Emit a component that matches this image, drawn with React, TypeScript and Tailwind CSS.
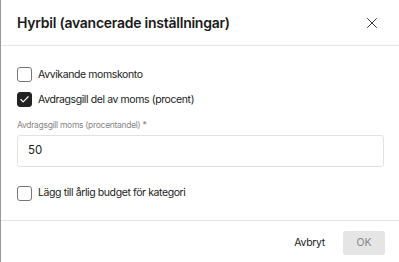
import { X, Check } from "lucide-react";

function Checkbox({ checked = false, label }: { checked?: boolean; label: string }) {
  return (
    <label className="flex items-center gap-[6px] h-[15px]">
      <span
        className={`flex h-[15px] w-[15px] items-center justify-center rounded-[3px] border ${
          checked ? "border-[#222] bg-[#222]" : "border-[#777] bg-white"
        }`}
      >
        {checked && <Check className="h-[11px] w-[11px] text-white" strokeWidth={2.5} />}
      </span>
      <span className="text-[10.5px] tracking-[-0.4px] text-[#222]">{label}</span>
    </label>
  );
}

export default function App() {
  return (
    <div className="h-[262px] w-[399px] overflow-hidden border-l border-[#999] bg-white font-['Inter',sans-serif]">
      {/* Header */}
      <div className="flex h-[46px] items-center justify-between border-b border-[#e5e5e5] pl-[16px] pr-[18px]">
        <h2 className="text-[14px] font-semibold tracking-[-0.25px] text-[#1a1a1a]">
          Hyrbil (avancerade inställningar)
        </h2>
        <X className="h-[18px] w-[18px] text-[#333]" strokeWidth={1.3} />
      </div>

      {/* Body */}
      <div className="flex h-[175px] flex-col border-b border-[#e5e5e5] px-[16px] pt-[21px]">
        <Checkbox label="Avvikande momskonto" />
        <div className="mt-[10px]">
          <Checkbox checked label="Avdragsgill del av moms (procent)" />
        </div>
        <div className="mt-[12px] text-[8.5px] tracking-[-0.3px] text-[#888]">Avdragsgill moms (procentandel) *</div>
        <div className="mt-[3px] flex h-[32px] w-[367px] items-center rounded-[3px] border border-[#e2e2e2] px-[10px] text-[11.5px] text-[#222]">
          50
        </div>
        <div className="mt-[19px]">
          <Checkbox label="Lägg till årlig budget för kategori" />
        </div>
      </div>

      {/* Footer */}
      <div className="flex items-center justify-end gap-[18px] pr-[14px] pt-[10px]">
        <button className="text-[10.5px] tracking-[-0.3px] text-[#222]">Avbryt</button>
        <button className="h-[24px] w-[42px] rounded-[3px] bg-[#e5e5e5] text-[10.5px] text-[#888]">OK</button>
      </div>
    </div>
  );
}
